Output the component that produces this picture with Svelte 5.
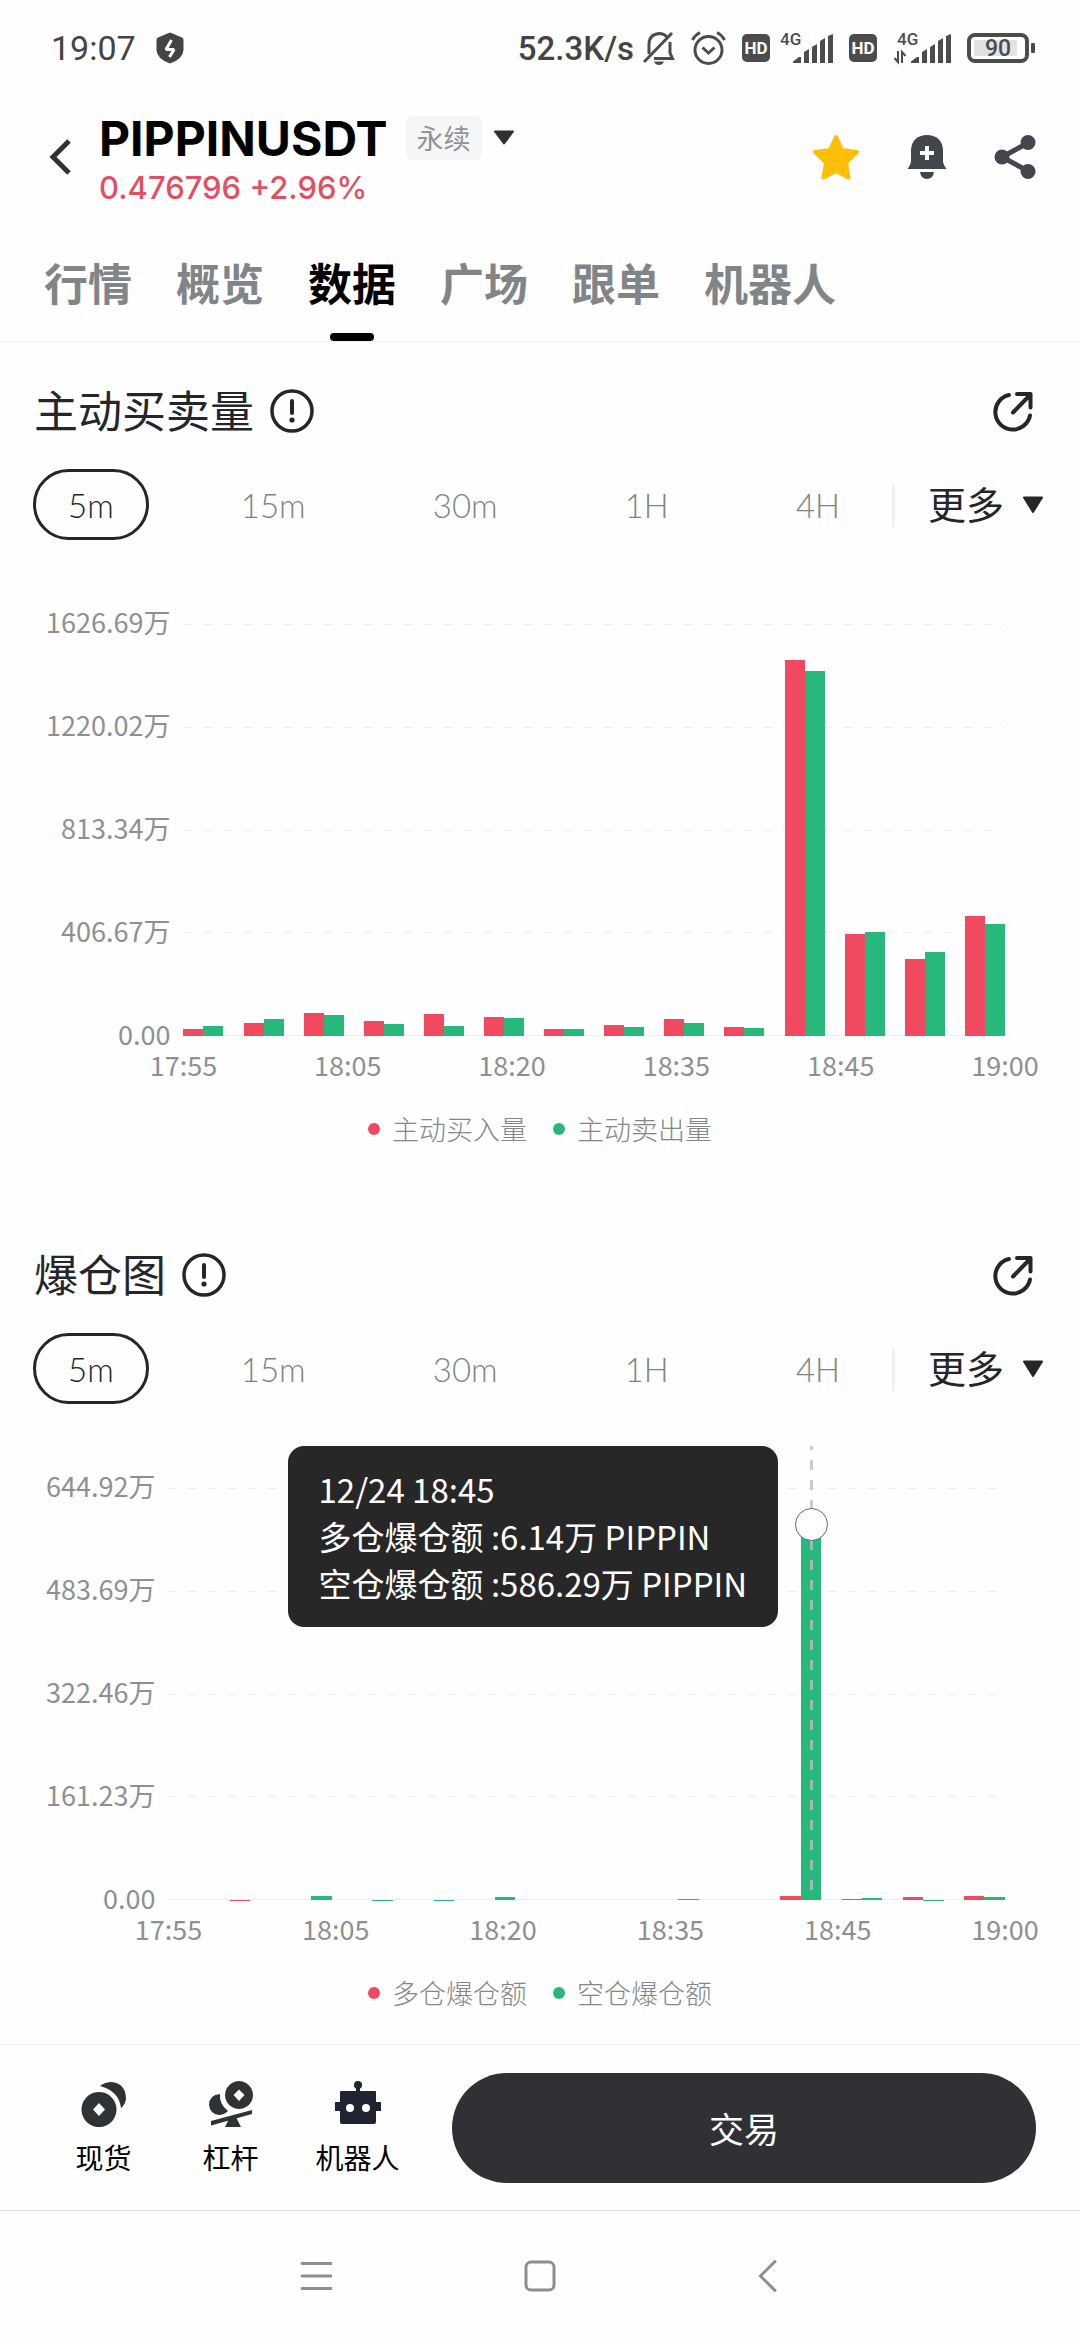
<script>
	const tabs = ['行情', '概览', '数据', '广场', '跟单', '机器人'];
	const periods = ['5m', '15m', '30m', '1H', '4H'];
	const times = ['17:55', '18:05', '18:20', '18:35', '18:45', '19:00'];

	let activeTab = '数据';

	// values in 万, one [red, green] pair per bar group
	let charts = [
		{
			title: '主动买卖量',
			period: '5m',
			max: 1626.69,
			ticks: ['1626.69万', '1220.02万', '813.34万', '406.67万', '0.00'],
			legend: ['主动买入量', '主动卖出量'],
			data: [
				[29, 40], [53, 66], [91, 82], [58, 49], [88, 41], [76, 71], [29, 28],
				[42, 34], [67, 50], [36, 32], [1483, 1443], [402, 409], [303, 330], [475, 443]
			],
			selected: -1,
			tooltip: []
		},
		{
			title: '爆仓图',
			period: '5m',
			max: 644.92,
			ticks: ['644.92万', '483.69万', '322.46万', '161.23万', '0.00'],
			legend: ['多仓爆仓额', '空仓爆仓额'],
			data: [
				[0, 0], [0.8, 0], [0, 6], [0, 0.2], [0, 0.3], [0, 4.2], [0, 0],
				[0, 0], [0, 1.2], [0, 0], [6.14, 586.29], [1.2, 2.6], [4.2, 0.3], [5.6, 4.8]
			],
			selected: 10,
			tooltip: ['12/24 18:45', '多仓爆仓额 :6.14万 PIPPIN', '空仓爆仓额 :586.29万 PIPPIN']
		}
	];
</script>

<div class="screen">
	<div class="status">
		<span class="clock">19:07</span>
		<svg class="shield" width="28" height="32" viewBox="0 0 28 32">
			<path d="M14 0.5 26 5.5Q27.5 6 27.5 8V18Q27 27 14 31.5 1 27 .5 18V8Q.5 6 2 5.5Z" fill="#444" />
			<path d="M15.5 8 10 17.5H18L13.5 25" fill="none" stroke="#fff" stroke-width="3" stroke-linejoin="bevel" />
		</svg>
		<div class="indicators">
			<span class="speed">52.3K/s</span>
			<svg width="32" height="34" viewBox="0 0 32 34" fill="none" stroke="#4c4c4c" stroke-width="3">
				<path d="M6 23V13.5Q6 3.5 16 2.5 21 2.5 24 6M27 11V22L29.5 27.5H11" />
				<path d="M1 31 29 2" />
				<path d="M11 30.5H21Q19.500 34 16 34 12.500 34 11 30.500Z" fill="#4c4c4c" stroke="none" />
			</svg>
			<svg width="35" height="34" viewBox="0 0 35 34" fill="none" stroke="#4c4c4c" stroke-width="3">
				<circle cx="17.500" cy="19" r="13.500" />
				<path d="M1.500 9Q4 4 9 1.500M33.500 9Q31 4 26 1.500" />
				<path d="M11.500 16.500 17.500 22 23.500 16.500" />
			</svg>
			<div class="sim">
				<svg width="28" height="28" viewBox="0 0 28 28">
					<rect width="28" height="28" rx="5" fill="#4c4c4c" />
					<text x="14" y="20" text-anchor="middle" class="hd">HD</text>
				</svg>
				<svg width="53" height="44" viewBox="0 -6 53 44">
					<text x="0" y="13" class="net">4G</text>
					<path d="M13 31V29.500L19 25H21V31ZM24 31V20L29 17V31ZM32 31V15L37 12V31ZM40 31V9L45 6V31ZM48 31V4L53 2V31Z" fill="#4c4c4c" />
				</svg>
			</div>
			<div class="sim">
				<svg width="28" height="28" viewBox="0 0 28 28">
					<rect width="28" height="28" rx="5" fill="#4c4c4c" />
					<text x="14" y="20" text-anchor="middle" class="hd">HD</text>
				</svg>
				<svg width="64" height="44" viewBox="0 -6 64 44">
					<text x="10" y="13" class="net">4G</text>
					<path d="M11 19V30L7.500 26M15 31V20L18.500 24" fill="none" stroke="#4c4c4c" stroke-width="2" />
					<path d="M24 31V29.500L30 25H32V31ZM35 31V20L40 17V31ZM43 31V15L48 12V31ZM51 31V9L56 6V31ZM59 31V4L64 2V31Z" fill="#4c4c4c" />
				</svg>
			</div>
			<svg width="68" height="30" viewBox="0 0 68 30">
				<rect x="2" y="2" width="58" height="26" rx="6" fill="none" stroke="#4c4c4c" stroke-width="4" />
				<rect x="7" y="7" width="43" height="16" rx="2" fill="#e2e2e2" />
				<rect x="64" y="10" width="4" height="10" rx="1" fill="#4c4c4c" />
				<text x="31" y="23" text-anchor="middle" class="battery">90</text>
			</svg>
		</div>
	</div>

	<header>
		<button class="back" aria-label="返回">
			<svg width="24" height="38" viewBox="0 0 24 38"><path d="M21 3 5 19 21 35" fill="none" stroke="#303134" stroke-width="5" /></svg>
		</button>
		<div class="pair-info">
			<button class="symbol">
				<span class="name">PIPPINUSDT</span>
				<span class="badge">永续</span>
				<svg width="22" height="16" viewBox="0 0 22 16"><path d="M2 1.500H20L11 13.500Z" fill="#303134" stroke="#303134" stroke-width="2" stroke-linejoin="round" /></svg>
			</button>
			<div class="price">0.476796 +2.96%</div>
		</div>
		<div class="actions">
			<button aria-label="收藏">
				<svg width="48" height="46" viewBox="0 0 48 46">
					<path d="M24 3 30 16 45 18 34 28.500 36.500 43.500 24 37 11.500 43.500 14 28.500 3 18 18 16Z" fill="#fdbf05" stroke="#fdbf05" stroke-width="4" stroke-linejoin="round" />
				</svg>
			</button>
			<button aria-label="提醒">
				<svg width="40" height="46" viewBox="0 0 40 46" fill="#44464d">
					<path d="M4 16Q5 1.500 20 1 35 1.500 36 16V27Q36 30 39.500 35H.5Q4 30 4 27Z" />
					<path d="M13 38H27Q26 45 20 45 14 45 13 38Z" />
					<path d="M20 12V26M13 19H27" stroke="#fff" stroke-width="4" />
				</svg>
			</button>
			<button aria-label="分享">
				<svg width="42" height="46" viewBox="0 0 42 46" fill="#44464d">
					<path d="M34 9 8 23 34 37" fill="none" stroke="#44464d" stroke-width="5" />
					<circle cx="34" cy="8.500" r="7.500" /><circle cx="8" cy="23" r="7.500" /><circle cx="34" cy="37.500" r="7.500" />
				</svg>
			</button>
		</div>
	</header>

	<nav class="tabs">
		{#each tabs as tab}
			<button class:active={tab === activeTab} on:click={() => (activeTab = tab)}>{tab}</button>
		{/each}
	</nav>

	<main>
		{#each charts as chart}
			<section>
				<div class="heading">
					<h2>{chart.title}</h2>
					<button aria-label="说明">
						<svg width="44" height="44" viewBox="0 0 44 44">
							<circle cx="22" cy="22" r="20" fill="none" stroke="#252629" stroke-width="3.500" />
							<path d="M22 12V24" stroke="#252629" stroke-width="4" stroke-linecap="round" />
							<circle cx="22" cy="31" r="2.600" fill="#252629" />
						</svg>
					</button>
					<button class="open" aria-label="分享图表">
						<svg width="40" height="42" viewBox="0 0 40 42" fill="none" stroke="#252629" stroke-width="4" stroke-linecap="round" stroke-linejoin="round">
							<path d="M16 5A17.500 17.500 0 1 0 37 25.500" />
							<path d="M20 22.500 37.500 4.500M24 4H37.500V17.500" />
						</svg>
					</button>
				</div>

				<div class="periods">
					<div class="choices">
						{#each periods as p}
							<button class:active={p === chart.period} on:click={() => (chart.period = p)}>{p}</button>
						{/each}
					</div>
					<button class="more">
						<span>更多</span>
						<svg width="22" height="18" viewBox="0 0 22 18"><path d="M2 1.500H20L11 16Z" fill="#252629" stroke="#252629" stroke-width="2" stroke-linejoin="round" /></svg>
					</button>
				</div>

				<div class="chart">
					<div class="axis-y">
						{#each chart.ticks as tick}
							<span>{tick}</span>
						{/each}
					</div>
					<div class="plot">
						<div class="lines">
							{#each chart.ticks as tick}
								<i></i>
							{/each}
						</div>
						<div class="bars">
							{#each chart.data as pair, i}
								<div class="group">
									<div class="col">
										<div class="bar red" style="height: {(pair[0] / chart.max) * 100}%"></div>
									</div>
									<div class="col">
										<div class="bar green" style="height: {(pair[1] / chart.max) * 100}%"></div>
										{#if i === chart.selected}
											<div class="crosshair"></div>
											<div class="marker" style="bottom: {(pair[1] / chart.max) * 100}%"></div>
											<div class="tooltip">
												{#each chart.tooltip as line}
													<p>{line}</p>
												{/each}
											</div>
										{/if}
									</div>
								</div>
							{/each}
						</div>
					</div>
					<div class="axis-x">
						{#each times as time}
							<span>{time}</span>
						{/each}
					</div>
				</div>

				<div class="legend">
					<span><i class="red"></i>{chart.legend[0]}</span>
					<span><i class="green"></i>{chart.legend[1]}</span>
				</div>
			</section>
		{/each}
	</main>

	<footer>
		<div class="links">
			<button>
				<svg width="46" height="46" viewBox="0 0 46 46" fill="#303336">
					<path d="M19 5Q24 1 31 1 45 3 45 18 44 24 40 27 38 10 19 5Z" />
					<path fill-rule="evenodd" d="M18 11a17.500 17.500 0 1 0 .01 0ZM18 22 24 28.500 18 35 12 28.500Z" />
				</svg>
				现货
			</button>
			<button>
				<svg width="46" height="46" viewBox="0 0 46 46" fill="#303336">
					<path fill-rule="evenodd" d="M31 0a14 14 0 1 0 .01 0ZM31 8.500 36.500 14 31 20 25.500 14Z" />
					<path d="M12 13Q1 14 1 24 2 33 11 34 16 34 20 30 11 23 12 13Z" />
					<path d="M3 40 44 29V33L3 44.500ZM21 38 28 36 33 46H17Z" />
				</svg>
				杠杆
			</button>
			<button>
				<svg width="46" height="46" viewBox="0 0 46 46" fill="#202331">
					<circle cx="23" cy="4" r="4" />
					<path d="M21 5H25V10H40Q41 10 41 11V21H46V30H41V41Q41 43 39 43H7Q5 43 5 41V30H0V21H5V11Q5 10 6 10H21Z" />
					<circle cx="15" cy="27" r="4" fill="#fff" /><circle cx="31" cy="27" r="4" fill="#fff" />
				</svg>
				机器人
			</button>
		</div>
		<button class="trade">交易</button>
	</footer>

	<div class="system">
		<button aria-label="菜单"><svg width="32" height="32" viewBox="0 0 32 32"><path d="M2 3.500H31M2 16H31M2 28.500H31" /></svg></button>
		<button aria-label="主页"><svg width="32" height="32" viewBox="0 0 32 32"><rect x="2" y="2" width="28" height="28" rx="5" /></svg></button>
		<button aria-label="后退"><svg width="32" height="32" viewBox="0 0 32 32"><path d="M27 1.500 12.500 16 27 30.500" /></svg></button>
	</div>
</div>

<style>
	:global(body) {
		background: #fefefe;
	}

	.screen {
		display: flex;
		flex-direction: column;
		min-height: 100vh;
		color: #252629;
		font-family: 'Noto Sans CJK SC', sans-serif;
	}

	button {
		display: flex;
		align-items: center;
		margin: 0;
		padding: 0;
		border: none;
		background: none;
		color: inherit;
		font: inherit;
		cursor: pointer;
	}

	svg {
		display: block;
		flex: none;
	}

	/* status bar */
	.status {
		display: flex;
		align-items: center;
		height: 96px;
		padding: 0 45px 0 51px;
		color: #444;
		font-family: Roboto, sans-serif;
	}

	.clock {
		font-size: 34px;
	}

	.shield {
		margin-left: 20px;
	}

	.indicators {
		display: flex;
		align-items: center;
		gap: 16px;
		margin-left: auto;
	}

	.speed {
		margin-right: -7px;
		font-size: 33px;
		font-weight: 500;
	}

	.sim {
		display: flex;
		align-items: center;
		gap: 10px;
	}

	.hd {
		fill: #fff;
		font: 700 17px Roboto, sans-serif;
	}

	.net {
		fill: #4c4c4c;
		font: 500 17px Roboto, sans-serif;
	}

	.battery {
		fill: #4c4c4c;
		font: 500 23px Roboto, sans-serif;
	}

	/* header */
	header {
		display: flex;
		align-items: center;
		padding: 14px 44px 0 48px;
	}

	.pair-info {
		margin-left: 27px;
	}

	.symbol {
		height: 56px;
	}

	.name {
		color: #000;
		font-family: Inter, sans-serif;
		font-size: 48px;
		font-weight: 700;
	}

	.badge {
		margin: 0 11px 0 18px;
		padding: 0 11px;
		border-radius: 6px;
		background: #f5f6f7;
		color: #909397;
		font-size: 27px;
		line-height: 44px;
	}

	.price {
		margin-top: 6px;
		color: #df5064;
		font-family: Inter, sans-serif;
		font-size: 31px;
		font-weight: 500;
		line-height: 32px;
	}

	.actions {
		display: flex;
		gap: 47px;
		margin-left: auto;
	}

	/* tabs */
	.tabs {
		display: flex;
		gap: 44px;
		padding: 48px 44px 0;
		border-bottom: 1px solid #eeeff0;
	}

	.tabs button {
		position: relative;
		padding-bottom: 29px;
		color: #818588;
		font-size: 44px;
		font-weight: 700;
		line-height: 60px;
	}

	.tabs .active {
		color: #000;
	}

	.tabs .active::after {
		content: '';
		position: absolute;
		bottom: 0;
		left: 50%;
		width: 44px;
		height: 8px;
		margin-left: -22px;
		border-radius: 4px;
		background: #000;
	}

	/* sections */
	main {
		flex: 1;
		display: flex;
		flex-direction: column;
		gap: 62px;
		padding-bottom: 36px;
	}

	section {
		padding-top: 44px;
	}

	.heading {
		display: flex;
		align-items: center;
		height: 50px;
		padding: 0 47px 0 34px;
	}

	h2 {
		margin: 0 16px 4px 0;
		font-size: 44px;
		font-weight: 400;
		line-height: 50px;
	}

	.open {
		margin-left: auto;
	}

	.periods {
		display: flex;
		align-items: center;
		margin-top: 33px;
		padding: 0 36px 0 33px;
	}

	.choices {
		flex: 1;
		display: flex;
		justify-content: space-between;
		padding-right: 17px;
	}

	.choices button {
		box-sizing: border-box;
		height: 71px;
		padding: 0 32px;
		border: 3px solid transparent;
		border-radius: 36px;
		color: #808386;
		font-family: Lato, sans-serif;
		font-size: 33px;
		font-weight: 300;
	}

	.choices .active {
		border-color: #252629;
		color: #252629;
	}

	.more {
		gap: 18px;
		padding-left: 33px;
		border-left: 3px solid #f0f1f3;
		font-size: 38px;
		line-height: 40px;
	}

	.more span {
		padding-bottom: 4px;
	}

	/* charts */
	.chart {
		display: grid;
		grid-template-columns: auto 1fr;
		column-gap: 13px;
		margin-top: 42px;
		padding: 0 75px 0 46px;
		color: #8d9093;
		font-size: 27px;
		line-height: 30px;
	}

	.axis-y {
		display: flex;
		flex-direction: column;
		justify-content: space-between;
		margin: 25px 0 -13px;
		text-align: right;
	}

	.plot {
		position: relative;
		height: 412px;
		padding-top: 42px;
	}

	.lines {
		display: flex;
		flex-direction: column;
		justify-content: space-between;
		height: 100%;
	}

	.lines i {
		height: 1px;
		background: repeating-linear-gradient(90deg, #eceeef 0 9px, transparent 9px 20px);
	}

	.lines i:last-child {
		background: #eceeef;
	}

	.bars {
		position: absolute;
		inset: 42px 0 0;
		display: flex;
		justify-content: space-between;
	}

	/* 14 groups with gaps half a group wide */
	.group {
		display: flex;
		width: calc(100% / 20.5);
	}

	.col {
		position: relative;
		flex: 1;
		display: flex;
		align-items: flex-end;
	}

	.bar {
		width: 100%;
	}

	.red {
		background: #f1495f;
	}

	.green {
		background: #26b97b;
	}

	.crosshair {
		position: absolute;
		top: -42px;
		bottom: 0;
		left: 50%;
		width: 3px;
		margin-left: -1px;
		background: repeating-linear-gradient(0deg, transparent 0 10px, #bcbec0cc 10px 20px);
	}

	.marker {
		position: absolute;
		left: 50%;
		box-sizing: border-box;
		width: 33px;
		height: 33px;
		margin: 0 0 -16px -16px;
		border: 1px solid #5064a8;
		border-radius: 50%;
		background: #fff;
	}

	.tooltip {
		position: absolute;
		top: -42px;
		right: calc(50% + 33px);
		padding: 20px 31px;
		border-radius: 16px;
		background: #272727;
		color: #fff;
		font-size: 33px;
		line-height: 47px;
		white-space: nowrap;
	}

	.tooltip p {
		margin: 0;
	}

	.axis-x {
		grid-column: 2;
		display: flex;
		justify-content: space-between;
		margin-top: 14px;
	}

	.axis-x span {
		display: flex;
		justify-content: center;
		width: 0;
	}

	.legend {
		display: flex;
		justify-content: center;
		gap: 26px;
		margin-top: 34px;
		color: #84878a;
		font-size: 27px;
		font-weight: 300;
		line-height: 30px;
	}

	.legend span {
		display: flex;
		align-items: center;
		gap: 12px;
	}

	.legend i {
		width: 12px;
		height: 12px;
		border-radius: 50%;
	}

	/* bottom bar */
	footer {
		display: flex;
		align-items: center;
		height: 165px;
		border-top: 1px solid #eeeff0;
		padding: 0 44px 0 40px;
	}

	.links {
		display: flex;
		width: 381px;
		margin-right: 31px;
	}

	.links button {
		flex: 1;
		flex-direction: column;
		gap: 12px;
		color: #000;
		font-size: 28px;
		line-height: 36px;
	}

	.trade {
		flex: 1;
		justify-content: center;
		height: 110px;
		border-radius: 55px;
		background: #303134;
		color: #fff;
		font-size: 35px;
	}

	.system {
		display: flex;
		justify-content: center;
		gap: 160px;
		height: 129px;
		border-top: 1px solid #dedede;
	}

	.system button {
		justify-content: center;
		width: 64px;
	}

	.system svg {
		fill: none;
		stroke: #8e8e8e;
		stroke-width: 3;
		stroke-linecap: round;
	}
</style>
